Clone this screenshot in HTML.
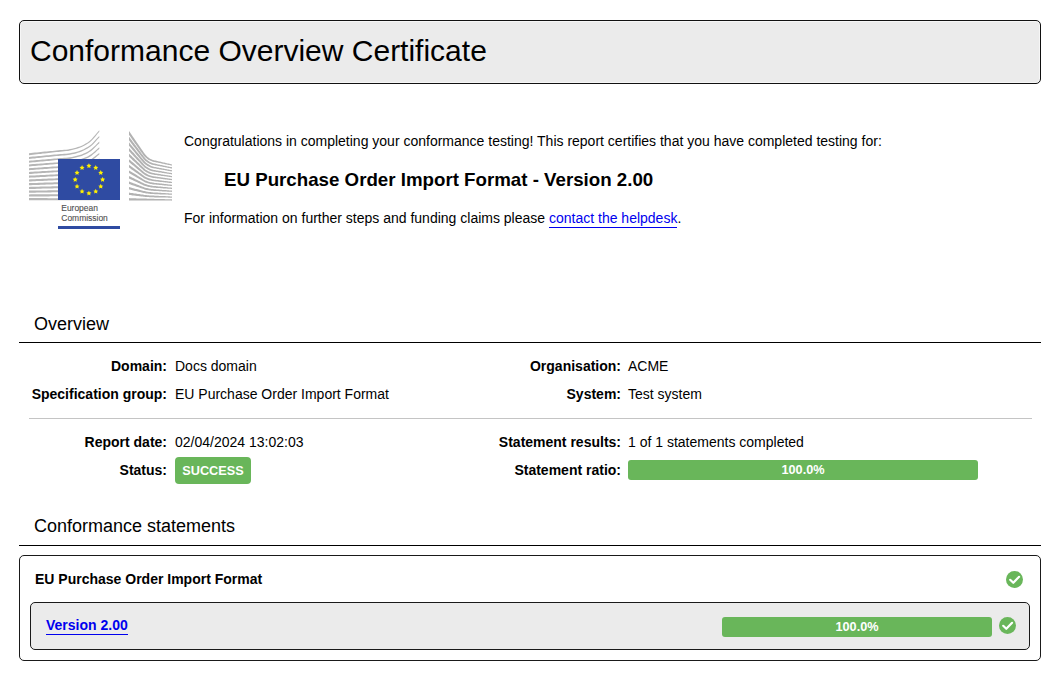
<!DOCTYPE html>
<html><head><meta charset="utf-8">
<style>
html,body{margin:0;padding:0;background:#fff;width:1060px;height:674px;overflow:hidden;}
body{font-family:"Liberation Sans",sans-serif;color:#000;position:relative;}
.abs{position:absolute;white-space:nowrap;}
#hdr{left:19px;top:20px;width:1020px;height:62px;border:1px solid #111;border-radius:5px;background:#ebebeb;box-shadow:inset 0 0 0 1px #f6f6f6;}
#title{left:30px;top:33px;font-size:30px;line-height:36px;}
.t14{font-size:14px;line-height:16px;}
a{color:#00e;text-decoration:none;border-bottom:1px solid #00e;padding-bottom:1px;}
.sec{left:34px;font-size:18px;line-height:20px;}
.hline{left:19px;width:1022px;height:1px;background:#000;}
.lbl{font-weight:bold;font-size:14px;line-height:16px;text-align:right;}
.val{font-size:14px;line-height:16px;}
.badge{background:#69b65a;color:#fff;font-weight:bold;font-size:12.7px;border-radius:4px;}
.bar{background:#69b65a;color:#fff;font-weight:bold;font-size:12.7px;text-align:center;border-radius:3px;}
.chk{width:17px;height:17px;}
</style></head><body>
<div id="hdr" class="abs"></div>
<div id="title" class="abs">Conformance Overview Certificate</div>

<svg class="abs" style="left:0;top:0" width="200" height="240" viewBox="0 0 200 240">
<path fill="#b6b6b6" d="M29.0 153.2 31.0 153.0 32.9 152.8 34.9 152.6 36.8 152.4 38.8 152.2 40.7 152.0 42.7 151.8 44.6 151.6 46.6 151.4 48.5 151.2 50.5 151.1 52.4 150.9 54.4 150.7 56.3 150.5 58.3 150.3 60.2 150.1 62.2 149.9 64.2 149.8 66.1 149.7 68.1 149.5 70.0 149.1 72.0 148.7 73.9 148.2 75.9 147.7 77.8 147.1 79.8 146.4 81.7 145.7 83.7 144.7 85.6 143.6 87.6 142.4 89.5 141.0 91.5 139.2 93.4 137.1 95.4 134.8 97.3 132.5 99.3 130.2 99.3 131.8 97.3 134.1 95.4 136.4 93.4 138.8 91.5 140.8 89.5 142.4 87.6 143.8 85.6 145.0 83.7 146.1 81.7 147.0 79.8 147.8 77.8 148.5 75.9 149.1 73.9 149.6 72.0 150.1 70.0 150.6 68.1 150.9 66.1 151.1 64.2 151.3 62.2 151.5 60.2 151.7 58.3 151.9 56.3 152.1 54.4 152.3 52.4 152.5 50.5 152.8 48.5 153.0 46.6 153.2 44.6 153.4 42.7 153.6 40.7 153.9 38.8 154.1 36.8 154.3 34.9 154.5 32.9 154.8 31.0 155.0 29.0 155.2ZM29.0 156.9 31.0 156.8 32.9 156.6 34.9 156.4 36.8 156.2 38.8 156.0 40.7 155.9 42.7 155.7 44.6 155.5 46.6 155.3 48.5 155.2 50.5 155.0 52.4 154.8 54.4 154.6 56.3 154.5 58.3 154.3 60.2 154.1 62.2 153.9 64.2 153.8 66.1 153.7 68.1 153.5 70.0 153.2 72.0 152.8 73.9 152.4 75.9 151.9 77.8 151.4 79.8 150.8 81.7 150.0 83.7 149.2 85.6 148.1 87.6 147.0 89.5 145.7 91.5 144.2 93.4 142.2 95.4 140.1 97.3 137.9 99.3 135.9 99.3 137.5 97.3 139.6 95.4 141.8 93.4 143.9 91.5 145.8 89.5 147.2 87.6 148.5 85.6 149.6 83.7 150.6 81.7 151.5 79.8 152.2 77.8 152.8 75.9 153.4 73.9 153.9 72.0 154.3 70.0 154.7 68.1 155.0 66.1 155.2 64.2 155.4 62.2 155.5 60.2 155.7 58.3 155.9 56.3 156.1 54.4 156.3 52.4 156.5 50.5 156.7 48.5 156.9 46.6 157.1 44.6 157.3 42.7 157.5 40.7 157.7 38.8 157.9 36.8 158.1 34.9 158.4 32.9 158.6 31.0 158.8 29.0 159.0ZM29.0 160.7 31.0 160.5 32.9 160.4 34.9 160.2 36.8 160.0 38.8 159.9 40.7 159.7 42.7 159.6 44.6 159.4 46.6 159.2 48.5 159.1 50.5 158.9 52.4 158.7 54.4 158.6 56.3 158.4 58.3 158.3 60.2 158.1 62.2 158.0 64.2 157.8 66.1 157.7 68.1 157.6 70.0 157.3 72.0 157.0 73.9 156.6 75.9 156.1 77.8 155.6 79.8 155.1 81.7 154.4 83.7 153.6 85.6 152.7 87.6 151.7 89.5 150.5 91.5 149.1 93.4 147.3 95.4 145.4 97.3 143.4 99.3 141.6 99.3 143.2 97.3 145.1 95.4 147.1 93.4 149.0 91.5 150.7 89.5 152.1 87.6 153.2 85.6 154.2 83.7 155.1 81.7 155.9 79.8 156.5 77.8 157.1 75.9 157.6 73.9 158.1 72.0 158.5 70.0 158.9 68.1 159.2 66.1 159.3 64.2 159.4 62.2 159.6 60.2 159.8 58.3 159.9 56.3 160.1 54.4 160.3 52.4 160.5 50.5 160.7 48.5 160.9 46.6 161.1 44.6 161.2 42.7 161.4 40.7 161.6 38.8 161.8 36.8 162.0 34.9 162.2 32.9 162.3 31.0 162.5 29.0 162.7ZM29.0 164.4 31.0 164.3 32.9 164.1 34.9 164.0 36.8 163.8 38.8 163.7 40.7 163.6 42.7 163.4 44.6 163.3 46.6 163.1 48.5 163.0 50.5 162.8 52.4 162.7 54.4 162.5 56.3 162.4 58.3 162.3 60.2 162.1 62.2 162.0 64.2 161.9 66.1 161.8 68.1 161.7 70.0 161.4 72.0 161.1 73.9 160.7 75.9 160.3 77.8 159.9 79.8 159.4 81.7 158.8 83.7 158.1 85.6 157.3 87.6 156.4 89.5 155.3 91.5 154.0 93.4 152.4 95.4 150.7 97.3 148.9 99.3 147.2 99.3 148.9 97.3 150.6 95.4 152.4 93.4 154.1 91.5 155.7 89.5 156.9 87.6 157.9 85.6 158.8 83.7 159.6 81.7 160.3 79.8 160.9 77.8 161.4 75.9 161.9 73.9 162.3 72.0 162.7 70.0 163.0 68.1 163.3 66.1 163.4 64.2 163.5 62.2 163.7 60.2 163.8 58.3 164.0 56.3 164.1 54.4 164.3 52.4 164.5 50.5 164.6 48.5 164.8 46.6 165.0 44.6 165.1 42.7 165.3 40.7 165.5 38.8 165.6 36.8 165.8 34.9 166.0 32.9 166.1 31.0 166.3 29.0 166.5ZM29.0 168.2 31.0 168.0 32.9 167.9 34.9 167.8 36.8 167.7 38.8 167.5 40.7 167.4 42.7 167.3 44.6 167.1 46.6 167.0 48.5 166.9 50.5 166.8 52.4 166.6 54.4 166.5 56.3 166.4 58.3 166.3 60.2 166.1 62.2 166.0 64.2 165.9 66.1 165.8 68.1 165.7 70.0 165.5 72.0 165.2 73.9 164.9 75.9 164.5 77.8 164.2 79.8 163.7 81.7 163.2 83.7 162.6 85.6 161.8 87.6 161.0 89.5 160.1 91.5 158.9 93.4 157.5 95.4 156.0 97.3 154.4 99.3 152.9 99.3 154.6 97.3 156.1 95.4 157.7 93.4 159.3 91.5 160.6 89.5 161.7 87.6 162.6 85.6 163.4 83.7 164.1 81.7 164.8 79.8 165.3 77.8 165.7 75.9 166.2 73.9 166.5 72.0 166.9 70.0 167.2 68.1 167.4 66.1 167.5 64.2 167.6 62.2 167.7 60.2 167.9 58.3 168.0 56.3 168.2 54.4 168.3 52.4 168.5 50.5 168.6 48.5 168.8 46.6 168.9 44.6 169.0 42.7 169.2 40.7 169.3 38.8 169.5 36.8 169.6 34.9 169.8 32.9 169.9 31.0 170.1 29.0 170.2ZM29.0 171.9 31.0 171.8 32.9 171.7 34.9 171.6 36.8 171.5 38.8 171.4 40.7 171.2 42.7 171.1 44.6 171.0 46.6 170.9 48.5 170.8 50.5 170.7 52.4 170.6 54.4 170.5 56.3 170.4 58.3 170.2 60.2 170.1 62.2 170.0 64.2 169.9 66.1 169.9 68.1 169.8 70.0 169.6 72.0 169.4 73.9 169.1 75.9 168.8 77.8 168.4 79.8 168.0 81.7 167.6 83.7 167.0 85.6 166.4 87.6 165.7 89.5 164.9 91.5 163.9 93.4 162.6 95.4 161.3 97.3 159.9 99.3 158.6 99.3 160.3 97.3 161.6 95.4 163.0 93.4 164.4 91.5 165.6 89.5 166.5 87.6 167.3 85.6 168.0 83.7 168.7 81.7 169.2 79.8 169.7 77.8 170.1 75.9 170.4 73.9 170.7 72.0 171.0 70.0 171.3 68.1 171.5 66.1 171.6 64.2 171.7 62.2 171.8 60.2 171.9 58.3 172.1 56.3 172.2 54.4 172.3 52.4 172.4 50.5 172.6 48.5 172.7 46.6 172.8 44.6 173.0 42.7 173.1 40.7 173.2 38.8 173.3 36.8 173.5 34.9 173.6 32.9 173.7 31.0 173.9 29.0 174.0ZM29.0 175.6 31.0 175.6 32.9 175.5 34.9 175.4 36.8 175.3 38.8 175.2 40.7 175.1 42.7 175.0 44.6 174.9 46.6 174.8 48.5 174.7 50.5 174.6 52.4 174.5 54.4 174.4 56.3 174.3 58.3 174.2 60.2 174.1 62.2 174.1 64.2 174.0 66.1 173.9 68.1 173.8 70.0 173.7 72.0 173.5 73.9 173.2 75.9 173.0 77.8 172.7 79.8 172.3 81.7 172.0 83.7 171.5 85.6 170.9 87.6 170.3 89.5 169.6 91.5 168.8 93.4 167.7 95.4 166.6 97.3 165.4 99.3 164.3 99.3 166.0 97.3 167.2 95.4 168.4 93.4 169.5 91.5 170.5 89.5 171.3 87.6 172.0 85.6 172.6 83.7 173.2 81.7 173.7 79.8 174.0 77.8 174.4 75.9 174.7 73.9 175.0 72.0 175.2 70.0 175.4 68.1 175.6 66.1 175.7 64.2 175.8 62.2 175.9 60.2 176.0 58.3 176.1 56.3 176.2 54.4 176.3 52.4 176.4 50.5 176.5 48.5 176.6 46.6 176.8 44.6 176.9 42.7 177.0 40.7 177.1 38.8 177.2 36.8 177.3 34.9 177.4 32.9 177.5 31.0 177.6 29.0 177.8ZM29.0 179.4 31.0 179.3 32.9 179.2 34.9 179.2 36.8 179.1 38.8 179.0 40.7 178.9 42.7 178.8 44.6 178.8 46.6 178.7 48.5 178.6 50.5 178.5 52.4 178.5 54.4 178.4 56.3 178.3 58.3 178.2 60.2 178.2 62.2 178.1 64.2 178.0 66.1 178.0 68.1 177.9 70.0 177.8 72.0 177.6 73.9 177.4 75.9 177.2 77.8 176.9 79.8 176.7 81.7 176.3 83.7 175.9 85.6 175.5 87.6 175.0 89.5 174.4 91.5 173.7 93.4 172.8 95.4 171.9 97.3 170.9 99.3 170.0 99.3 171.7 97.3 172.7 95.4 173.7 93.4 174.6 91.5 175.5 89.5 176.2 87.6 176.7 85.6 177.2 83.7 177.7 81.7 178.1 79.8 178.4 77.8 178.7 75.9 179.0 73.9 179.2 72.0 179.4 70.0 179.6 68.1 179.7 66.1 179.8 64.2 179.9 62.2 179.9 60.2 180.0 58.3 180.1 56.3 180.2 54.4 180.3 52.4 180.4 50.5 180.5 48.5 180.6 46.6 180.7 44.6 180.8 42.7 180.9 40.7 181.0 38.8 181.0 36.8 181.1 34.9 181.2 32.9 181.3 31.0 181.4 29.0 181.5ZM29.0 183.1 31.0 183.1 32.9 183.0 34.9 182.9 36.8 182.9 38.8 182.8 40.7 182.8 42.7 182.7 44.6 182.6 46.6 182.6 48.5 182.5 50.5 182.5 52.4 182.4 54.4 182.3 56.3 182.3 58.3 182.2 60.2 182.2 62.2 182.1 64.2 182.1 66.1 182.0 68.1 182.0 70.0 181.9 72.0 181.7 73.9 181.6 75.9 181.4 77.8 181.2 79.8 181.0 81.7 180.7 83.7 180.4 85.6 180.1 87.6 179.7 89.5 179.2 91.5 178.6 93.4 177.9 95.4 177.2 97.3 176.4 99.3 175.6 99.3 177.4 97.3 178.2 95.4 179.0 93.4 179.8 91.5 180.4 89.5 181.0 87.6 181.4 85.6 181.8 83.7 182.2 81.7 182.5 79.8 182.8 77.8 183.0 75.9 183.2 73.9 183.4 72.0 183.6 70.0 183.7 68.1 183.8 66.1 183.9 64.2 184.0 62.2 184.0 60.2 184.1 58.3 184.2 56.3 184.2 54.4 184.3 52.4 184.4 50.5 184.5 48.5 184.5 46.6 184.6 44.6 184.7 42.7 184.7 40.7 184.8 38.8 184.9 36.8 185.0 34.9 185.0 32.9 185.1 31.0 185.2 29.0 185.3ZM29.0 186.9 31.0 186.8 32.9 186.8 34.9 186.7 36.8 186.7 38.8 186.7 40.7 186.6 42.7 186.6 44.6 186.5 46.6 186.5 48.5 186.4 50.5 186.4 52.4 186.3 54.4 186.3 56.3 186.3 58.3 186.2 60.2 186.2 62.2 186.1 64.2 186.1 66.1 186.1 68.1 186.0 70.0 186.0 72.0 185.9 73.9 185.7 75.9 185.6 77.8 185.5 79.8 185.3 81.7 185.1 83.7 184.9 85.6 184.6 87.6 184.3 89.5 184.0 91.5 183.5 93.4 183.0 95.4 182.5 97.3 181.9 99.3 181.3 99.3 183.1 97.3 183.7 95.4 184.3 93.4 184.9 91.5 185.4 89.5 185.8 87.6 186.2 85.6 186.5 83.7 186.7 81.7 187.0 79.8 187.2 77.8 187.3 75.9 187.5 73.9 187.6 72.0 187.8 70.0 187.9 68.1 188.0 66.1 188.0 64.2 188.0 62.2 188.1 60.2 188.1 58.3 188.2 56.3 188.2 54.4 188.3 52.4 188.4 50.5 188.4 48.5 188.5 46.6 188.5 44.6 188.6 42.7 188.6 40.7 188.7 38.8 188.7 36.8 188.8 34.9 188.9 32.9 188.9 31.0 189.0 29.0 189.0ZM29.0 190.6 31.0 190.6 32.9 190.6 34.9 190.5 36.8 190.5 38.8 190.5 40.7 190.4 42.7 190.4 44.6 190.4 46.6 190.4 48.5 190.3 50.5 190.3 52.4 190.3 54.4 190.3 56.3 190.2 58.3 190.2 60.2 190.2 62.2 190.1 64.2 190.1 66.1 190.1 68.1 190.1 70.0 190.0 72.0 190.0 73.9 189.9 75.9 189.8 77.8 189.7 79.8 189.6 81.7 189.5 83.7 189.3 85.6 189.2 87.6 189.0 89.5 188.7 91.5 188.5 93.4 188.1 95.4 187.7 97.3 187.4 99.3 187.0 99.3 188.9 97.3 189.2 95.4 189.6 93.4 190.0 91.5 190.4 89.5 190.6 87.6 190.9 85.6 191.1 83.7 191.3 81.7 191.4 79.8 191.5 77.8 191.7 75.9 191.8 73.9 191.9 72.0 191.9 70.0 192.0 68.1 192.1 66.1 192.1 64.2 192.1 62.2 192.2 60.2 192.2 58.3 192.2 56.3 192.3 54.4 192.3 52.4 192.3 50.5 192.4 48.5 192.4 46.6 192.4 44.6 192.5 42.7 192.5 40.7 192.6 38.8 192.6 36.8 192.6 34.9 192.7 32.9 192.7 31.0 192.7 29.0 192.8ZM29.0 194.4 31.0 194.3 32.9 194.3 34.9 194.3 36.8 194.3 38.8 194.3 40.7 194.3 42.7 194.3 44.6 194.3 46.6 194.3 48.5 194.2 50.5 194.2 52.4 194.2 54.4 194.2 56.3 194.2 58.3 194.2 60.2 194.2 62.2 194.2 64.2 194.2 66.1 194.2 68.1 194.2 70.0 194.1 72.0 194.1 73.9 194.1 75.9 194.0 77.8 194.0 79.8 193.9 81.7 193.9 83.7 193.8 85.6 193.7 87.6 193.6 89.5 193.5 91.5 193.4 93.4 193.2 95.4 193.0 97.3 192.8 99.3 192.6 99.3 194.6 97.3 194.8 95.4 195.0 93.4 195.2 91.5 195.3 89.5 195.5 87.6 195.6 85.6 195.7 83.7 195.8 81.7 195.9 79.8 195.9 77.8 196.0 75.9 196.0 73.9 196.1 72.0 196.1 70.0 196.2 68.1 196.2 66.1 196.2 64.2 196.2 62.2 196.2 60.2 196.2 58.3 196.3 56.3 196.3 54.4 196.3 52.4 196.3 50.5 196.3 48.5 196.4 46.6 196.4 44.6 196.4 42.7 196.4 40.7 196.4 38.8 196.4 36.8 196.5 34.9 196.5 32.9 196.5 31.0 196.5 29.0 196.5ZM29.0 198.1 31.0 198.1 32.9 198.1 34.9 198.1 36.8 198.1 38.8 198.1 40.7 198.1 42.7 198.1 44.6 198.1 46.6 198.1 48.5 198.2 50.5 198.2 52.4 198.2 54.4 198.2 56.3 198.2 58.3 198.2 60.2 198.2 62.2 198.2 64.2 198.2 66.1 198.2 68.1 198.2 70.0 198.2 72.0 198.2 73.9 198.2 75.9 198.2 77.8 198.2 79.8 198.2 81.7 198.2 83.7 198.3 85.6 198.3 87.6 198.3 89.5 198.3 91.5 198.3 93.4 198.3 95.4 198.3 97.3 198.3 99.3 198.3 99.3 200.3 97.3 200.3 95.4 200.3 93.4 200.3 91.5 200.3 89.5 200.3 87.6 200.3 85.6 200.3 83.7 200.3 81.7 200.3 79.8 200.3 77.8 200.3 75.9 200.3 73.9 200.3 72.0 200.3 70.0 200.3 68.1 200.3 66.1 200.3 64.2 200.3 62.2 200.3 60.2 200.3 58.3 200.3 56.3 200.3 54.4 200.3 52.4 200.3 50.5 200.3 48.5 200.3 46.6 200.3 44.6 200.3 42.7 200.3 40.7 200.3 38.8 200.3 36.8 200.3 34.9 200.3 32.9 200.3 31.0 200.3 29.0 200.3Z"/>
<path fill="#b2b2b2" d="M129.0 131.1 129.9 132.3 130.7 133.6 131.6 134.8 132.4 136.1 133.3 137.3 134.2 138.6 135.0 139.8 135.9 141.0 136.7 142.3 137.6 143.5 138.5 144.8 139.3 146.0 140.2 147.3 141.0 148.5 141.9 149.8 142.8 151.0 143.6 152.3 144.5 153.5 145.3 154.6 146.2 155.6 147.1 156.4 147.9 157.2 148.8 157.8 149.6 158.4 150.5 158.9 151.4 159.3 152.2 159.7 153.1 160.0 153.9 160.2 154.8 160.4 155.7 160.6 156.5 160.8 157.4 161.0 158.2 161.2 159.1 161.4 160.0 161.6 160.8 161.8 161.7 162.0 162.5 162.2 163.4 162.4 164.3 162.6 165.1 162.8 166.0 163.0 166.8 163.2 167.7 163.4 168.6 163.6 169.4 163.8 170.3 164.0 171.1 164.2 172.0 164.4 172.0 165.6 171.1 165.4 170.3 165.3 169.4 165.1 168.6 164.9 167.7 164.7 166.8 164.6 166.0 164.4 165.1 164.2 164.3 164.0 163.4 163.8 162.5 163.7 161.7 163.5 160.8 163.3 160.0 163.1 159.1 163.0 158.2 162.8 157.4 162.6 156.5 162.4 155.7 162.3 154.8 162.1 153.9 161.9 153.1 161.7 152.2 161.4 151.4 161.1 150.5 160.8 149.6 160.3 148.8 159.9 147.9 159.4 147.1 158.7 146.2 158.1 145.3 157.3 144.5 156.4 143.6 155.4 142.8 154.3 141.9 153.1 141.0 151.9 140.2 150.7 139.3 149.4 138.5 148.2 137.6 147.0 136.7 145.8 135.9 144.6 135.0 143.4 134.2 142.2 133.3 141.0 132.4 139.8 131.6 138.5 130.7 137.3 129.9 136.1 129.0 134.9ZM129.0 136.7 129.9 137.8 130.7 139.0 131.6 140.1 132.4 141.3 133.3 142.4 134.2 143.6 135.0 144.7 135.9 145.8 136.7 147.0 137.6 148.1 138.5 149.3 139.3 150.4 140.2 151.6 141.0 152.7 141.9 153.9 142.8 155.0 143.6 156.2 144.5 157.3 145.3 158.3 146.2 159.2 147.1 160.0 147.9 160.6 148.8 161.2 149.6 161.7 150.5 162.2 151.4 162.6 152.2 162.9 153.1 163.2 153.9 163.4 154.8 163.6 155.7 163.8 156.5 164.0 157.4 164.2 158.2 164.4 159.1 164.6 160.0 164.7 160.8 164.9 161.7 165.1 162.5 165.3 163.4 165.5 164.3 165.7 165.1 165.8 166.0 166.0 166.8 166.2 167.7 166.4 168.6 166.6 169.4 166.8 170.3 166.9 171.1 167.1 172.0 167.3 172.0 168.5 171.1 168.4 170.3 168.2 169.4 168.0 168.6 167.9 167.7 167.7 166.8 167.6 166.0 167.4 165.1 167.2 164.3 167.1 163.4 166.9 162.5 166.7 161.7 166.6 160.8 166.4 160.0 166.3 159.1 166.1 158.2 165.9 157.4 165.8 156.5 165.6 155.7 165.5 154.8 165.3 153.9 165.1 153.1 164.9 152.2 164.7 151.4 164.4 150.5 164.1 149.6 163.7 148.8 163.3 147.9 162.8 147.1 162.2 146.2 161.6 145.3 160.9 144.5 160.1 143.6 159.2 142.8 158.1 141.9 157.0 141.0 155.9 140.2 154.8 139.3 153.7 138.5 152.6 137.6 151.4 136.7 150.3 135.9 149.2 135.0 148.1 134.2 147.0 133.3 145.9 132.4 144.8 131.6 143.7 130.7 142.6 129.9 141.5 129.0 140.3ZM129.0 142.3 129.9 143.4 130.7 144.4 131.6 145.4 132.4 146.5 133.3 147.5 134.2 148.6 135.0 149.6 135.9 150.7 136.7 151.7 137.6 152.7 138.5 153.8 139.3 154.8 140.2 155.9 141.0 156.9 141.9 157.9 142.8 159.0 143.6 160.1 144.5 161.1 145.3 162.0 146.2 162.8 147.1 163.5 147.9 164.1 148.8 164.6 149.6 165.1 150.5 165.5 151.4 165.9 152.2 166.2 153.1 166.4 153.9 166.7 154.8 166.9 155.7 167.0 156.5 167.2 157.4 167.4 158.2 167.5 159.1 167.7 160.0 167.9 160.8 168.0 161.7 168.2 162.5 168.4 163.4 168.5 164.3 168.7 165.1 168.9 166.0 169.0 166.8 169.2 167.7 169.4 168.6 169.5 169.4 169.7 170.3 169.9 171.1 170.0 172.0 170.2 172.0 171.5 171.1 171.3 170.3 171.2 169.4 171.0 168.6 170.9 167.7 170.7 166.8 170.6 166.0 170.4 165.1 170.3 164.3 170.1 163.4 170.0 162.5 169.8 161.7 169.7 160.8 169.5 160.0 169.4 159.1 169.2 158.2 169.1 157.4 168.9 156.5 168.8 155.7 168.6 154.8 168.5 153.9 168.3 153.1 168.2 152.2 167.9 151.4 167.7 150.5 167.4 149.6 167.0 148.8 166.6 147.9 166.2 147.1 165.7 146.2 165.1 145.3 164.5 144.5 163.7 143.6 162.9 142.8 161.9 141.9 160.9 141.0 159.9 140.2 158.9 139.3 157.9 138.5 156.9 137.6 155.9 136.7 154.9 135.9 153.9 135.0 152.8 134.2 151.8 133.3 150.8 132.4 149.8 131.6 148.8 130.7 147.8 129.9 146.8 129.0 145.8ZM129.0 147.9 129.9 148.9 130.7 149.8 131.6 150.8 132.4 151.7 133.3 152.6 134.2 153.6 135.0 154.5 135.9 155.5 136.7 156.4 137.6 157.3 138.5 158.3 139.3 159.2 140.2 160.1 141.0 161.1 141.9 162.0 142.8 163.0 143.6 163.9 144.5 164.9 145.3 165.7 146.2 166.4 147.1 167.0 147.9 167.6 148.8 168.1 149.6 168.5 150.5 168.9 151.4 169.2 152.2 169.5 153.1 169.7 153.9 169.9 154.8 170.1 155.7 170.2 156.5 170.4 157.4 170.5 158.2 170.7 159.1 170.8 160.0 171.0 160.8 171.1 161.7 171.3 162.5 171.4 163.4 171.6 164.3 171.7 165.1 171.9 166.0 172.1 166.8 172.2 167.7 172.4 168.6 172.5 169.4 172.7 170.3 172.8 171.1 173.0 172.0 173.1 172.0 174.4 171.1 174.2 170.3 174.1 169.4 174.0 168.6 173.8 167.7 173.7 166.8 173.6 166.0 173.4 165.1 173.3 164.3 173.2 163.4 173.0 162.5 172.9 161.7 172.8 160.8 172.6 160.0 172.5 159.1 172.4 158.2 172.2 157.4 172.1 156.5 172.0 155.7 171.8 154.8 171.7 153.9 171.6 153.1 171.4 152.2 171.2 151.4 171.0 150.5 170.7 149.6 170.4 148.8 170.0 147.9 169.6 147.1 169.2 146.2 168.6 145.3 168.1 144.5 167.4 143.6 166.6 142.8 165.8 141.9 164.9 141.0 163.9 140.2 163.0 139.3 162.1 138.5 161.2 137.6 160.3 136.7 159.4 135.9 158.5 135.0 157.6 134.2 156.7 133.3 155.8 132.4 154.8 131.6 153.9 130.7 153.0 129.9 152.1 129.0 151.2ZM129.0 153.6 129.9 154.4 130.7 155.2 131.6 156.1 132.4 156.9 133.3 157.7 134.2 158.6 135.0 159.4 135.9 160.3 136.7 161.1 137.6 161.9 138.5 162.8 139.3 163.6 140.2 164.4 141.0 165.3 141.9 166.1 142.8 166.9 143.6 167.8 144.5 168.6 145.3 169.4 146.2 170.0 147.1 170.6 147.9 171.0 148.8 171.5 149.6 171.8 150.5 172.2 151.4 172.5 152.2 172.7 153.1 172.9 153.9 173.1 154.8 173.3 155.7 173.4 156.5 173.5 157.4 173.7 158.2 173.8 159.1 174.0 160.0 174.1 160.8 174.2 161.7 174.4 162.5 174.5 163.4 174.7 164.3 174.8 165.1 174.9 166.0 175.1 166.8 175.2 167.7 175.3 168.6 175.5 169.4 175.6 170.3 175.8 171.1 175.9 172.0 176.0 172.0 177.3 171.1 177.2 170.3 177.1 169.4 176.9 168.6 176.8 167.7 176.7 166.8 176.6 166.0 176.5 165.1 176.3 164.3 176.2 163.4 176.1 162.5 176.0 161.7 175.9 160.8 175.7 160.0 175.6 159.1 175.5 158.2 175.4 157.4 175.3 156.5 175.1 155.7 175.0 154.8 174.9 153.9 174.8 153.1 174.6 152.2 174.5 151.4 174.3 150.5 174.0 149.6 173.7 148.8 173.4 147.9 173.0 147.1 172.6 146.2 172.2 145.3 171.6 144.5 171.1 143.6 170.4 142.8 169.6 141.9 168.8 141.0 168.0 140.2 167.2 139.3 166.4 138.5 165.5 137.6 164.7 136.7 163.9 135.9 163.1 135.0 162.3 134.2 161.5 133.3 160.7 132.4 159.9 131.6 159.1 130.7 158.3 129.9 157.5 129.0 156.6ZM129.0 159.2 129.9 159.9 130.7 160.6 131.6 161.4 132.4 162.1 133.3 162.8 134.2 163.6 135.0 164.3 135.9 165.0 136.7 165.8 137.6 166.5 138.5 167.2 139.3 168.0 140.2 168.7 141.0 169.5 141.9 170.2 142.8 170.9 143.6 171.7 144.5 172.4 145.3 173.0 146.2 173.6 147.1 174.1 147.9 174.5 148.8 174.9 149.6 175.2 150.5 175.5 151.4 175.8 152.2 176.0 153.1 176.2 153.9 176.3 154.8 176.5 155.7 176.6 156.5 176.7 157.4 176.8 158.2 177.0 159.1 177.1 160.0 177.2 160.8 177.3 161.7 177.5 162.5 177.6 163.4 177.7 164.3 177.8 165.1 178.0 166.0 178.1 166.8 178.2 167.7 178.3 168.6 178.5 169.4 178.6 170.3 178.7 171.1 178.8 172.0 179.0 172.0 180.2 171.1 180.1 170.3 180.0 169.4 179.9 168.6 179.8 167.7 179.7 166.8 179.6 166.0 179.5 165.1 179.4 164.3 179.3 163.4 179.2 162.5 179.1 161.7 179.0 160.8 178.8 160.0 178.7 159.1 178.6 158.2 178.5 157.4 178.4 156.5 178.3 155.7 178.2 154.8 178.1 153.9 178.0 153.1 177.9 152.2 177.7 151.4 177.5 150.5 177.3 149.6 177.1 148.8 176.8 147.9 176.5 147.1 176.1 146.2 175.7 145.3 175.2 144.5 174.7 143.6 174.1 142.8 173.4 141.9 172.7 141.0 172.0 140.2 171.3 139.3 170.6 138.5 169.9 137.6 169.2 136.7 168.5 135.9 167.8 135.0 167.1 134.2 166.3 133.3 165.6 132.4 164.9 131.6 164.2 130.7 163.5 129.9 162.8 129.0 162.1ZM129.0 164.8 129.9 165.4 130.7 166.0 131.6 166.7 132.4 167.3 133.3 167.9 134.2 168.6 135.0 169.2 135.9 169.8 136.7 170.5 137.6 171.1 138.5 171.7 139.3 172.4 140.2 173.0 141.0 173.6 141.9 174.3 142.8 174.9 143.6 175.5 144.5 176.2 145.3 176.7 146.2 177.2 147.1 177.6 147.9 178.0 148.8 178.3 149.6 178.6 150.5 178.8 151.4 179.0 152.2 179.2 153.1 179.4 153.9 179.5 154.8 179.7 155.7 179.8 156.5 179.9 157.4 180.0 158.2 180.1 159.1 180.2 160.0 180.3 160.8 180.4 161.7 180.5 162.5 180.7 163.4 180.8 164.3 180.9 165.1 181.0 166.0 181.1 166.8 181.2 167.7 181.3 168.6 181.4 169.4 181.5 170.3 181.6 171.1 181.8 172.0 181.9 172.0 183.1 171.1 183.0 170.3 182.9 169.4 182.9 168.6 182.8 167.7 182.7 166.8 182.6 166.0 182.5 165.1 182.4 164.3 182.3 163.4 182.2 162.5 182.1 161.7 182.0 160.8 182.0 160.0 181.9 159.1 181.8 158.2 181.7 157.4 181.6 156.5 181.5 155.7 181.4 154.8 181.3 153.9 181.2 153.1 181.1 152.2 181.0 151.4 180.8 150.5 180.6 149.6 180.4 148.8 180.2 147.9 179.9 147.1 179.6 146.2 179.2 145.3 178.8 144.5 178.4 143.6 177.9 142.8 177.3 141.9 176.7 141.0 176.1 140.2 175.4 139.3 174.8 138.5 174.2 137.6 173.6 136.7 173.0 135.9 172.4 135.0 171.8 134.2 171.2 133.3 170.6 132.4 170.0 131.6 169.4 130.7 168.8 129.9 168.1 129.0 167.5ZM129.0 170.4 129.9 170.9 130.7 171.4 131.6 171.9 132.4 172.5 133.3 173.0 134.2 173.5 135.0 174.1 135.9 174.6 136.7 175.1 137.6 175.7 138.5 176.2 139.3 176.7 140.2 177.3 141.0 177.8 141.9 178.3 142.8 178.9 143.6 179.4 144.5 179.9 145.3 180.4 146.2 180.8 147.1 181.1 147.9 181.4 148.8 181.7 149.6 181.9 150.5 182.2 151.4 182.3 152.2 182.5 153.1 182.6 153.9 182.8 154.8 182.9 155.7 183.0 156.5 183.1 157.4 183.2 158.2 183.2 159.1 183.3 160.0 183.4 160.8 183.5 161.7 183.6 162.5 183.7 163.4 183.8 164.3 183.9 165.1 184.0 166.0 184.1 166.8 184.2 167.7 184.3 168.6 184.4 169.4 184.5 170.3 184.6 171.1 184.7 172.0 184.8 172.0 186.0 171.1 186.0 170.3 185.9 169.4 185.8 168.6 185.7 167.7 185.7 166.8 185.6 166.0 185.5 165.1 185.4 164.3 185.4 163.4 185.3 162.5 185.2 161.7 185.1 160.8 185.1 160.0 185.0 159.1 184.9 158.2 184.8 157.4 184.8 156.5 184.7 155.7 184.6 154.8 184.5 153.9 184.4 153.1 184.4 152.2 184.2 151.4 184.1 150.5 184.0 149.6 183.8 148.8 183.6 147.9 183.3 147.1 183.1 146.2 182.8 145.3 182.4 144.5 182.1 143.6 181.6 142.8 181.1 141.9 180.6 141.0 180.1 140.2 179.6 139.3 179.1 138.5 178.6 137.6 178.1 136.7 177.6 135.9 177.1 135.0 176.6 134.2 176.0 133.3 175.5 132.4 175.0 131.6 174.5 130.7 174.0 129.9 173.5 129.0 173.0ZM129.0 175.9 129.9 176.4 130.7 176.8 131.6 177.2 132.4 177.7 133.3 178.1 134.2 178.5 135.0 178.9 135.9 179.4 136.7 179.8 137.6 180.2 138.5 180.7 139.3 181.1 140.2 181.5 141.0 182.0 141.9 182.4 142.8 182.8 143.6 183.3 144.5 183.7 145.3 184.0 146.2 184.3 147.1 184.6 147.9 184.9 148.8 185.1 149.6 185.3 150.5 185.5 151.4 185.6 152.2 185.8 153.1 185.9 153.9 186.0 154.8 186.1 155.7 186.1 156.5 186.2 157.4 186.3 158.2 186.4 159.1 186.5 160.0 186.6 160.8 186.6 161.7 186.7 162.5 186.8 163.4 186.9 164.3 187.0 165.1 187.0 166.0 187.1 166.8 187.2 167.7 187.3 168.6 187.4 169.4 187.5 170.3 187.5 171.1 187.6 172.0 187.7 172.0 189.0 171.1 188.9 170.3 188.8 169.4 188.8 168.6 188.7 167.7 188.7 166.8 188.6 166.0 188.5 165.1 188.5 164.3 188.4 163.4 188.4 162.5 188.3 161.7 188.2 160.8 188.2 160.0 188.1 159.1 188.0 158.2 188.0 157.4 187.9 156.5 187.9 155.7 187.8 154.8 187.7 153.9 187.7 153.1 187.6 152.2 187.5 151.4 187.4 150.5 187.3 149.6 187.1 148.8 187.0 147.9 186.8 147.1 186.6 146.2 186.3 145.3 186.0 144.5 185.7 143.6 185.4 142.8 185.0 141.9 184.6 141.0 184.2 140.2 183.8 139.3 183.3 138.5 182.9 137.6 182.5 136.7 182.1 135.9 181.7 135.0 181.3 134.2 180.9 133.3 180.5 132.4 180.1 131.6 179.7 130.7 179.3 129.9 178.9 129.0 178.5ZM129.0 181.5 129.9 181.8 130.7 182.2 131.6 182.5 132.4 182.8 133.3 183.2 134.2 183.5 135.0 183.8 135.9 184.1 136.7 184.5 137.6 184.8 138.5 185.1 139.3 185.4 140.2 185.8 141.0 186.1 141.9 186.4 142.8 186.8 143.6 187.1 144.5 187.4 145.3 187.7 146.2 187.9 147.1 188.1 147.9 188.3 148.8 188.5 149.6 188.7 150.5 188.8 151.4 188.9 152.2 189.0 153.1 189.1 153.9 189.2 154.8 189.3 155.7 189.3 156.5 189.4 157.4 189.5 158.2 189.5 159.1 189.6 160.0 189.7 160.8 189.7 161.7 189.8 162.5 189.9 163.4 189.9 164.3 190.0 165.1 190.1 166.0 190.1 166.8 190.2 167.7 190.3 168.6 190.3 169.4 190.4 170.3 190.5 171.1 190.5 172.0 190.6 172.0 191.9 171.1 191.8 170.3 191.8 169.4 191.7 168.6 191.7 167.7 191.7 166.8 191.6 166.0 191.6 165.1 191.5 164.3 191.5 163.4 191.4 162.5 191.4 161.7 191.3 160.8 191.3 160.0 191.2 159.1 191.2 158.2 191.1 157.4 191.1 156.5 191.0 155.7 191.0 154.8 190.9 153.9 190.9 153.1 190.8 152.2 190.8 151.4 190.7 150.5 190.6 149.6 190.5 148.8 190.3 147.9 190.2 147.1 190.0 146.2 189.9 145.3 189.7 144.5 189.4 143.6 189.1 142.8 188.8 141.9 188.5 141.0 188.2 140.2 187.9 139.3 187.6 138.5 187.3 137.6 187.0 136.7 186.7 135.9 186.4 135.0 186.1 134.2 185.8 133.3 185.5 132.4 185.2 131.6 184.9 130.7 184.6 129.9 184.2 129.0 183.9ZM129.0 187.1 129.9 187.3 130.7 187.5 131.6 187.8 132.4 188.0 133.3 188.2 134.2 188.4 135.0 188.7 135.9 188.9 136.7 189.1 137.6 189.3 138.5 189.6 139.3 189.8 140.2 190.0 141.0 190.2 141.9 190.5 142.8 190.7 143.6 190.9 144.5 191.1 145.3 191.3 146.2 191.5 147.1 191.7 147.9 191.8 148.8 191.9 149.6 192.0 150.5 192.1 151.4 192.2 152.2 192.3 153.1 192.4 153.9 192.4 154.8 192.5 155.7 192.5 156.5 192.6 157.4 192.6 158.2 192.7 159.1 192.7 160.0 192.8 160.8 192.8 161.7 192.9 162.5 192.9 163.4 193.0 164.3 193.0 165.1 193.1 166.0 193.2 166.8 193.2 167.7 193.3 168.6 193.3 169.4 193.4 170.3 193.4 171.1 193.5 172.0 193.5 172.0 194.8 171.1 194.8 170.3 194.7 169.4 194.7 168.6 194.7 167.7 194.6 166.8 194.6 166.0 194.6 165.1 194.5 164.3 194.5 163.4 194.5 162.5 194.4 161.7 194.4 160.8 194.4 160.0 194.4 159.1 194.3 158.2 194.3 157.4 194.3 156.5 194.2 155.7 194.2 154.8 194.2 153.9 194.1 153.1 194.1 152.2 194.0 151.4 194.0 150.5 193.9 149.6 193.8 148.8 193.7 147.9 193.6 147.1 193.5 146.2 193.4 145.3 193.3 144.5 193.1 143.6 192.9 142.8 192.7 141.9 192.5 141.0 192.3 140.2 192.1 139.3 191.9 138.5 191.7 137.6 191.5 136.7 191.3 135.9 191.1 135.0 190.9 134.2 190.7 133.3 190.5 132.4 190.3 131.6 190.0 130.7 189.8 129.9 189.6 129.0 189.4ZM129.0 192.6 129.9 192.7 130.7 192.9 131.6 193.0 132.4 193.1 133.3 193.2 134.2 193.4 135.0 193.5 135.9 193.6 136.7 193.7 137.6 193.9 138.5 194.0 139.3 194.1 140.2 194.2 141.0 194.4 141.9 194.5 142.8 194.6 143.6 194.7 144.5 194.9 145.3 195.0 146.2 195.1 147.1 195.2 147.9 195.2 148.8 195.3 149.6 195.4 150.5 195.4 151.4 195.5 152.2 195.5 153.1 195.6 153.9 195.6 154.8 195.7 155.7 195.7 156.5 195.7 157.4 195.8 158.2 195.8 159.1 195.9 160.0 195.9 160.8 195.9 161.7 196.0 162.5 196.0 163.4 196.1 164.3 196.1 165.1 196.1 166.0 196.2 166.8 196.2 167.7 196.2 168.6 196.3 169.4 196.3 170.3 196.4 171.1 196.4 172.0 196.4 172.0 197.7 171.1 197.7 170.3 197.7 169.4 197.7 168.6 197.7 167.7 197.6 166.8 197.6 166.0 197.6 165.1 197.6 164.3 197.6 163.4 197.5 162.5 197.5 161.7 197.5 160.8 197.5 160.0 197.5 159.1 197.5 158.2 197.4 157.4 197.4 156.5 197.4 155.7 197.4 154.8 197.4 153.9 197.3 153.1 197.3 152.2 197.3 151.4 197.3 150.5 197.2 149.6 197.2 148.8 197.1 147.9 197.1 147.1 197.0 146.2 197.0 145.3 196.9 144.5 196.8 143.6 196.7 142.8 196.6 141.9 196.5 141.0 196.4 140.2 196.3 139.3 196.2 138.5 196.1 137.6 196.0 136.7 195.9 135.9 195.8 135.0 195.7 134.2 195.6 133.3 195.5 132.4 195.4 131.6 195.2 130.7 195.1 129.9 195.0 129.0 194.9ZM129.0 198.1 129.9 198.2 130.7 198.2 131.6 198.2 132.4 198.2 133.3 198.3 134.2 198.3 135.0 198.3 135.9 198.3 136.7 198.4 137.6 198.4 138.5 198.4 139.3 198.4 140.2 198.5 141.0 198.5 141.9 198.5 142.8 198.5 143.6 198.6 144.5 198.6 145.3 198.6 146.2 198.6 147.1 198.7 147.9 198.7 148.8 198.7 149.6 198.7 150.5 198.7 151.4 198.8 152.2 198.8 153.1 198.8 153.9 198.8 154.8 198.9 155.7 198.9 156.5 198.9 157.4 198.9 158.2 199.0 159.1 199.0 160.0 199.0 160.8 199.0 161.7 199.1 162.5 199.1 163.4 199.1 164.3 199.1 165.1 199.2 166.0 199.2 166.8 199.2 167.7 199.2 168.6 199.3 169.4 199.3 170.3 199.3 171.1 199.3 172.0 199.3 172.0 200.7 171.1 200.6 170.3 200.6 169.4 200.6 168.6 200.6 167.7 200.6 166.8 200.6 166.0 200.6 165.1 200.6 164.3 200.6 163.4 200.6 162.5 200.6 161.7 200.6 160.8 200.6 160.0 200.6 159.1 200.6 158.2 200.6 157.4 200.6 156.5 200.6 155.7 200.6 154.8 200.6 153.9 200.6 153.1 200.6 152.2 200.6 151.4 200.6 150.5 200.6 149.6 200.5 148.8 200.5 147.9 200.5 147.1 200.5 146.2 200.5 145.3 200.5 144.5 200.5 143.6 200.5 142.8 200.5 141.9 200.5 141.0 200.5 140.2 200.5 139.3 200.5 138.5 200.5 137.6 200.5 136.7 200.5 135.9 200.5 135.0 200.5 134.2 200.5 133.3 200.5 132.4 200.5 131.6 200.5 130.7 200.5 129.9 200.5 129.0 200.5Z"/>
<rect x="58" y="159" width="62" height="41" fill="#2f4ba2"/>
<g fill="#fff000"><polygon points="88.90,163.25 89.68,164.83 91.42,165.08 90.16,166.31 90.46,168.04 88.90,167.22 87.34,168.04 87.64,166.31 86.38,165.08 88.12,164.83"/><polygon points="95.75,165.09 96.53,166.66 98.27,166.92 97.01,168.14 97.31,169.88 95.75,169.06 94.19,169.88 94.49,168.14 93.23,166.92 94.97,166.66"/><polygon points="100.76,170.10 101.54,171.68 103.28,171.93 102.02,173.16 102.32,174.89 100.76,174.07 99.21,174.89 99.50,173.16 98.24,171.93 99.99,171.68"/><polygon points="102.60,176.95 103.38,178.53 105.12,178.78 103.86,180.01 104.16,181.74 102.60,180.92 101.04,181.74 101.34,180.01 100.08,178.78 101.82,178.53"/><polygon points="100.76,183.80 101.54,185.38 103.28,185.63 102.02,186.86 102.32,188.59 100.76,187.77 99.21,188.59 99.50,186.86 98.24,185.63 99.99,185.38"/><polygon points="95.75,188.81 96.53,190.39 98.27,190.65 97.01,191.87 97.31,193.61 95.75,192.79 94.19,193.61 94.49,191.87 93.23,190.65 94.97,190.39"/><polygon points="88.90,190.65 89.68,192.23 91.42,192.48 90.16,193.71 90.46,195.44 88.90,194.62 87.34,195.44 87.64,193.71 86.38,192.48 88.12,192.23"/><polygon points="82.05,188.81 82.83,190.39 84.57,190.65 83.31,191.87 83.61,193.61 82.05,192.79 80.49,193.61 80.79,191.87 79.53,190.65 81.27,190.39"/><polygon points="77.04,183.80 77.81,185.38 79.56,185.63 78.30,186.86 78.59,188.59 77.04,187.77 75.48,188.59 75.78,186.86 74.52,185.63 76.26,185.38"/><polygon points="75.20,176.95 75.98,178.53 77.72,178.78 76.46,180.01 76.76,181.74 75.20,180.92 73.64,181.74 73.94,180.01 72.68,178.78 74.42,178.53"/><polygon points="77.04,170.10 77.81,171.68 79.56,171.93 78.30,173.16 78.59,174.89 77.04,174.07 75.48,174.89 75.78,173.16 74.52,171.93 76.26,171.68"/><polygon points="82.05,165.09 82.83,166.66 84.57,166.92 83.31,168.14 83.61,169.88 82.05,169.06 80.49,169.88 80.79,168.14 79.53,166.92 81.27,166.66"/></g>
<rect x="58" y="226" width="62" height="3" fill="#2f4ba2"/>
<text x="61.3" y="211" font-family="Liberation Sans" font-size="9.6" fill="#505050" stroke="#505050" stroke-width="0.12" textLength="36.6" lengthAdjust="spacingAndGlyphs">European</text>
<text x="61.3" y="221" font-family="Liberation Sans" font-size="9.6" fill="#505050" stroke="#505050" stroke-width="0.12" textLength="46.5" lengthAdjust="spacingAndGlyphs">Commission</text>
</svg>

<div class="abs t14" style="left:184px;top:133px">Congratulations in completing your conformance testing! This report certifies that you have completed testing for:</div>
<div class="abs" style="left:224px;top:170px;font-size:18.72px;line-height:20px;font-weight:bold">EU Purchase Order Import Format - Version 2.00</div>
<div class="abs t14" style="left:184px;top:210px">For information on further steps and funding claims please <a href="#">contact the helpdesk</a>.</div>

<div class="abs sec" style="top:314px">Overview</div>
<div class="abs hline" style="top:342px"></div>

<div class="abs lbl" style="right:893px;top:358px">Domain:</div>
<div class="abs val" style="left:175px;top:358px">Docs domain</div>
<div class="abs lbl" style="right:893px;top:386px">Specification group:</div>
<div class="abs val" style="left:175px;top:386px">EU Purchase Order Import Format</div>
<div class="abs lbl" style="right:439px;top:358px">Organisation:</div>
<div class="abs val" style="left:628px;top:358px">ACME</div>
<div class="abs lbl" style="right:439px;top:386px">System:</div>
<div class="abs val" style="left:628px;top:386px">Test system</div>

<div class="abs" style="left:29px;top:418px;width:1003px;height:1px;background:#c4c4c4"></div>

<div class="abs lbl" style="right:893px;top:434px">Report date:</div>
<div class="abs val" style="left:175px;top:434px">02/04/2024 13:02:03</div>
<div class="abs lbl" style="right:893px;top:462px">Status:</div>
<div class="abs badge" style="left:175px;top:457px;width:76px;height:26px;padding-top:1px;line-height:27px;text-align:center">SUCCESS</div>
<div class="abs lbl" style="right:439px;top:434px">Statement results:</div>
<div class="abs val" style="left:628px;top:434px">1 of 1 statements completed</div>
<div class="abs lbl" style="right:439px;top:462px">Statement ratio:</div>
<div class="abs bar" style="left:628px;top:460px;width:350px;height:20px;line-height:20px">100.0%</div>

<div class="abs sec" style="top:516px">Conformance statements</div>
<div class="abs hline" style="top:545px"></div>

<div class="abs" style="left:19px;top:555px;width:1020px;height:104px;border:1px solid #1a1a1a;border-radius:5px;background:#fff"></div>
<div class="abs lbl" style="left:35px;top:571px;text-align:left">EU Purchase Order Import Format</div>
<div class="abs chk" style="left:1006px;top:571px"><svg viewBox="0 0 17 17" width="17" height="17"><circle cx="8.5" cy="8.5" r="8.5" fill="#69b65a"/><path d="M4.2 8.8L7.3 11.8L13.1 5.8" fill="none" stroke="#fff" stroke-width="2.2" stroke-linecap="round" stroke-linejoin="round"/></svg></div>
<div class="abs" style="left:30px;top:602px;width:998px;height:46px;border:1px solid #1a1a1a;border-radius:5px;background:#ebebeb"></div>
<div class="abs lbl" style="left:46px;top:617px;text-align:left"><a href="#">Version 2.00</a></div>
<div class="abs bar" style="left:722px;top:617px;width:270px;height:20px;line-height:20px">100.0%</div>
<div class="abs chk" style="left:999px;top:617px"><svg viewBox="0 0 17 17" width="17" height="17"><circle cx="8.5" cy="8.5" r="8.5" fill="#69b65a"/><path d="M4.2 8.8L7.3 11.8L13.1 5.8" fill="none" stroke="#fff" stroke-width="2.2" stroke-linecap="round" stroke-linejoin="round"/></svg></div>
</body></html>
